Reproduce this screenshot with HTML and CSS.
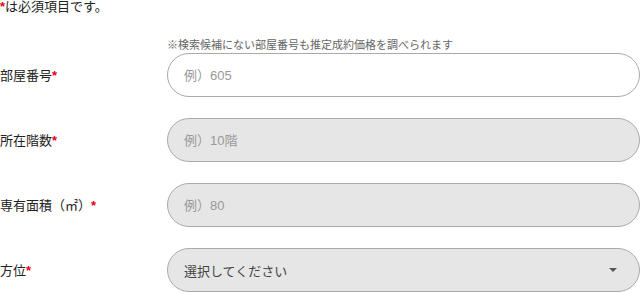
FILE: index.html
```html
<!DOCTYPE html>
<html lang="ja">
<head>
<meta charset="utf-8">
<link rel="stylesheet" href="styles.css">
</head>
<body>
<p class="notice"><span class="req">*</span>は必須項目です。</p>
<form class="form">
  <div class="row">
    <label class="label">部屋番号<span class="req">*</span></label>
    <div class="field">
      <p class="hint">※検索候補にない部屋番号も推定成約価格を調べられます</p>
      <input class="input" type="text" placeholder="例）605">
    </div>
  </div>
  <div class="row">
    <label class="label">所在階数<span class="req">*</span></label>
    <div class="field">
      <input class="input disabled" type="text" placeholder="例）10階" disabled>
    </div>
  </div>
  <div class="row">
    <label class="label">専有面積（㎡）<span class="req">*</span></label>
    <div class="field">
      <input class="input disabled" type="text" placeholder="例）80" disabled>
    </div>
  </div>
  <div class="row">
    <label class="label">方位<span class="req">*</span></label>
    <div class="field">
      <div class="select">
        <span class="select-text">選択してください</span>
        <span class="arrow"></span>
      </div>
    </div>
  </div>
</form>
</body>
</html>
```
FILE: styles.css
```css
html, body {
  margin: 0;
  padding: 0;
  background: #fff;
}
body {
  font-family: "Liberation Sans", "Noto Sans CJK JP", sans-serif;
  font-size: 13px;
  color: #222;
  width: 640px;
  overflow: hidden;
}
.notice {
  margin: 0;
  line-height: 13px;
  height: 13px;
}
.req {
  color: #e60012;
  font-weight: bold;
}
.form {
  display: flex;
  flex-direction: column;
  gap: 21px;
  margin-top: 25px;
}
.row {
  display: grid;
  grid-template-columns: 167px 1fr;
  align-items: end;
}
.label {
  height: 44px;
  display: flex;
  align-items: center;
  line-height: 13px;
}
.field {
  display: flex;
  flex-direction: column;
}
.hint {
  margin: 0 0 1px;
  font-size: 11px;
  line-height: 14px;
  color: #666;
}
.input, .select {
  box-sizing: border-box;
  width: 473px;
  height: 44px;
  border: 1px solid #aaa;
  border-radius: 22px;
  padding: 0 16px;
  font-family: inherit;
  font-size: 13px;
  background: #fff;
  color: #333;
  outline: none;
  margin: 0;
}
.input::placeholder {
  color: #999;
}
.input.disabled {
  background: #e6e6e6;
}
.select {
  background: #e6e6e6;
  display: flex;
  align-items: center;
  justify-content: space-between;
  padding-right: 22px;
}
.select-text {
  color: #444;
}
.arrow {
  width: 0;
  height: 0;
  border-left: 4px solid transparent;
  border-right: 4px solid transparent;
  border-top: 4px solid #555;
}
```
